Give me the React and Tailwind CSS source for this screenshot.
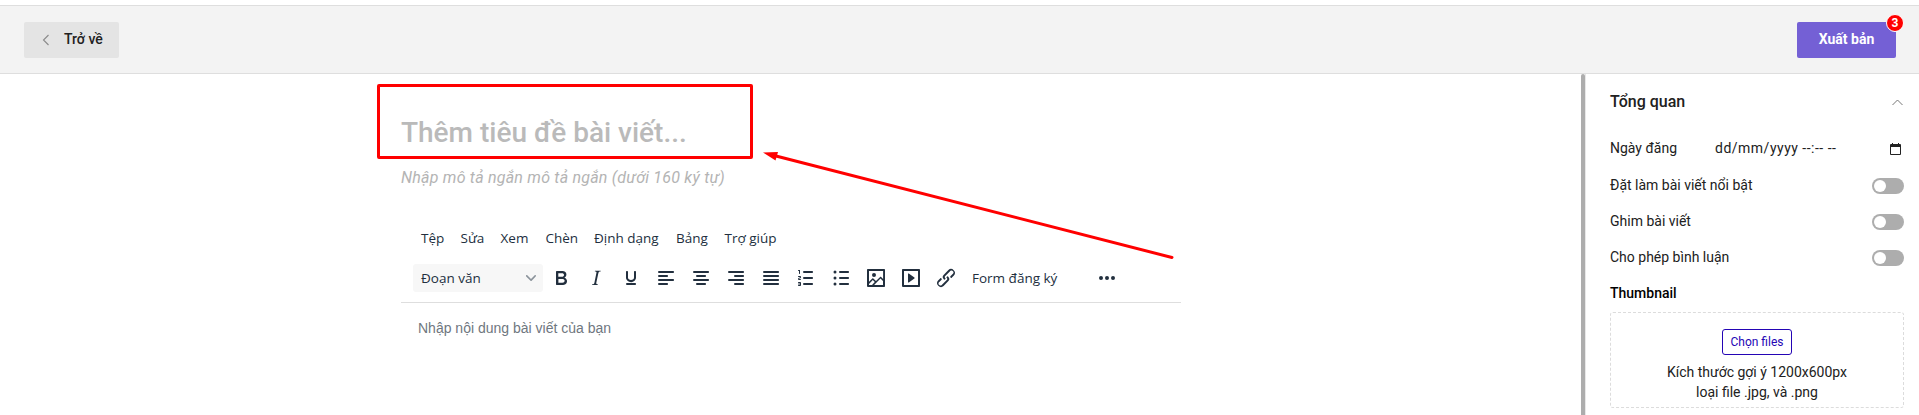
const ICONS = {
  bold: "M7.8 19c-.3 0-.5 0-.6-.2l-.2-.5V5.7c0-.2 0-.4.2-.5l.6-.2h5c1.5 0 2.7.3 3.5 1 .7.6 1.1 1.4 1.1 2.5a3 3 0 0 1-.6 1.9c-.4.6-1 1-1.6 1.2.4.1.9.3 1.3.6s.8.7 1 1.2c.4.4.5 1 .5 1.6 0 1.3-.4 2.3-1.3 3-.8.7-2.1 1-3.8 1H7.8Zm5-8.3c.6 0 1.2-.1 1.6-.5.4-.3.6-.7.6-1.3 0-1.1-.8-1.7-2.3-1.7H9.3v3.5h3.4Zm.5 6c.7 0 1.3-.1 1.7-.4.4-.4.6-.9.6-1.5s-.2-1-.7-1.4c-.4-.3-1-.4-2-.4H9.4v3.8h4Z",
  italic: "m16.7 4.7-.1.9h-.3c-.6 0-1 0-1.4.3-.3.3-.4.6-.5 1.1l-2.1 9.8v.6c0 .5.4.8 1.4.8h.2l-.2.8H8l.2-.8h.2c1.1 0 1.8-.5 2-1.5l2-9.8.1-.5c0-.6-.4-.8-1.4-.8h-.3l.2-.9h5.8Z",
  underline: "M16 5c.6 0 1 .4 1 1v5.5a4 4 0 0 1-.4 1.8l-1 1.4a5.3 5.3 0 0 1-5.5 1 5 5 0 0 1-1.6-1c-.5-.4-.8-.9-1.1-1.4a4 4 0 0 1-.4-1.8V6c0-.6.4-1 1-1s1 .4 1 1v5.5c0 .3 0 .6.2 1l.6.7a3.3 3.3 0 0 0 2.2.8 3.4 3.4 0 0 0 2.2-.8c.3-.2.4-.5.6-.8l.2-.9V6c0-.6.4-1 1-1ZM8 17h8c.6 0 1 .4 1 1s-.4 1-1 1H8a1 1 0 0 1 0-2Z",
  alignLeft: "M5 5h14c.6 0 1 .4 1 1s-.4 1-1 1H5a1 1 0 1 1 0-2Zm0 4h8c.6 0 1 .4 1 1s-.4 1-1 1H5a1 1 0 1 1 0-2Zm0 8h8c.6 0 1 .4 1 1s-.4 1-1 1H5a1 1 0 0 1 0-2Zm0-4h14c.6 0 1 .4 1 1s-.4 1-1 1H5a1 1 0 0 1 0-2Z",
  alignCenter: "M5 5h14c.6 0 1 .4 1 1s-.4 1-1 1H5a1 1 0 1 1 0-2Zm3 4h8c.6 0 1 .4 1 1s-.4 1-1 1H8a1 1 0 1 1 0-2Zm0 8h8c.6 0 1 .4 1 1s-.4 1-1 1H8a1 1 0 0 1 0-2Zm-3-4h14c.6 0 1 .4 1 1s-.4 1-1 1H5a1 1 0 0 1 0-2Z",
  alignRight: "M5 5h14c.6 0 1 .4 1 1s-.4 1-1 1H5a1 1 0 1 1 0-2Zm6 4h8c.6 0 1 .4 1 1s-.4 1-1 1h-8a1 1 0 0 1 0-2Zm0 8h8c.6 0 1 .4 1 1s-.4 1-1 1h-8a1 1 0 0 1 0-2Zm-6-4h14c.6 0 1 .4 1 1s-.4 1-1 1H5a1 1 0 0 1 0-2Z",
  justify: "M5 5h14c.6 0 1 .4 1 1s-.4 1-1 1H5a1 1 0 1 1 0-2Zm0 4h14c.6 0 1 .4 1 1s-.4 1-1 1H5a1 1 0 1 1 0-2Zm0 4h14c.6 0 1 .4 1 1s-.4 1-1 1H5a1 1 0 0 1 0-2Zm0 4h14c.6 0 1 .4 1 1s-.4 1-1 1H5a1 1 0 0 1 0-2Z",
  ordered: "M10 17h8c.6 0 1 .4 1 1s-.4 1-1 1h-8a1 1 0 0 1 0-2Zm0-6h8c.6 0 1 .4 1 1s-.4 1-1 1h-8a1 1 0 0 1 0-2Zm0-6h8c.6 0 1 .4 1 1s-.4 1-1 1h-8a1 1 0 1 1 0-2ZM6 4v3.5c0 .3-.2.5-.5.5a.5.5 0 0 1-.5-.5V5h-.5a.5.5 0 0 1 0-1H6Zm-1 8.8.2.2h1.3c.3 0 .5.2.5.5s-.2.5-.5.5H4.9a1 1 0 0 1-.9-1V13c0-.4.3-.8.6-1l1.2-.4.2-.3a.2.2 0 0 0-.2-.2H4.5a.5.5 0 0 1-.5-.5c0-.3.2-.5.5-.5h1.6c.5 0 .9.4.9 1v.1c0 .4-.3.8-.6 1l-1.2.4-.2.3ZM7 17v2c0 .6-.4 1-1 1H4.5a.5.5 0 0 1 0-1h1.2c.2 0 .3-.1.3-.3 0-.2-.1-.3-.3-.3H4.4a.4.4 0 1 1 0-.8h1.3c.2 0 .3-.1.3-.3 0-.2-.1-.3-.3-.3H4.5a.5.5 0 1 1 0-1H6c.6 0 1 .4 1 1Z",
  bullets: "M11 5h8c.6 0 1 .4 1 1s-.4 1-1 1h-8a1 1 0 0 1 0-2Zm0 6h8c.6 0 1 .4 1 1s-.4 1-1 1h-8a1 1 0 0 1 0-2Zm0 6h8c.6 0 1 .4 1 1s-.4 1-1 1h-8a1 1 0 0 1 0-2ZM4.500 6a1.500 1.500 0 1 1 3 0 1.500 1.500 0 0 1-3 0Zm0 6a1.500 1.500 0 1 1 3 0 1.500 1.500 0 0 1-3 0Zm0 6a1.500 1.500 0 1 1 3 0 1.500 1.500 0 0 1-3 0Z",
  image: "m5 15.7 3.3-3.2c.3-.3.7-.3 1 0L12 15l4.1-4c.3-.4.8-.4 1 0l2 1.9V5H5v10.7ZM5 18V19h3l2.8-2.9-2-2L5 17.9Zm14-3-2.5-2.4-6.4 6.5H19v-4ZM4 3h16c.6 0 1 .4 1 1v16c0 .6-.4 1-1 1H4a1 1 0 0 1-1-1V4c0-.6.4-1 1-1Zm6 8a2 2 0 1 0 0-4 2 2 0 0 0 0 4Z",
  media: "M4 3h16c.6 0 1 .4 1 1v16c0 .6-.4 1-1 1H4a1 1 0 0 1-1-1V4c0-.6.4-1 1-1Zm1 2v14h14V5H5Zm4.8 2.6 5.6 4a.5.5 0 0 1 0 .8l-5.6 4A.5.5 0 0 1 9 16V8a.5.5 0 0 1 .8-.4Z",
  link: "M6.2 12.3a1 1 0 0 1 1.4 1.4l-2 2a2 2 0 1 0 2.6 2.8l4.8-4.8a1 1 0 0 0 0-1.4 1 1 0 1 1 1.4-1.3 2.9 2.9 0 0 1 0 4L9.6 20a3.9 3.9 0 0 1-5.5-5.5l2-2Zm11.6-.6a1 1 0 0 1-1.4-1.4l2-2a2 2 0 1 0-2.6-2.8L11 10.3a1 1 0 0 0 0 1.4A1 1 0 1 1 9.6 13a2.9 2.9 0 0 1 0-4L14.4 4a3.9 3.9 0 0 1 5.5 5.5l-2 2Z",
  more: "M6 10a2 2 0 1 0 0 4 2 2 0 0 0 0-4Zm12 0a2 2 0 1 0 0 4 2 2 0 0 0 0-4Zm-6 0a2 2 0 1 0 0 4 2 2 0 0 0 0-4Z",
};

const TOOLS = ["bold", "italic", "underline", "alignLeft", "alignCenter", "alignRight", "justify", "ordered", "bullets", "image", "media", "link"];

const MENU = [
  { label: "Tệp", width: "w-[39.5px]" },
  { label: "Sửa", width: "w-[40px]" },
  { label: "Xem", width: "w-[45px]" },
  { label: "Chèn", width: "w-[48.5px]" },
  { label: "Định dạng", width: "w-[82px]" },
  { label: "Bảng", width: "w-[48.5px]" },
  { label: "Trợ giúp", width: "w-[60px]" },
];

function ToolIcon({ name }) {
  return (
    <button className="flex h-7 w-[35px] shrink-0 items-center justify-center">
      <svg className="size-6 fill-[#222f3e]" viewBox="0 0 24 24" fillRule="evenodd">
        <path fillRule="evenodd" d={ICONS[name]} />
      </svg>
    </button>
  );
}

function Header() {
  return (
    <header className="mt-[5px] flex h-[69px] shrink-0 items-center justify-between border-y border-[#dedede] bg-[#f3f3f3] pr-[23px] pl-6">
      <button className="flex h-9 w-[95px] items-center rounded-[2px] bg-[#e4e4e4] pl-[18px] text-[14px] font-medium text-[#212121]">
        <svg className="mr-[14px] h-3 w-2" viewBox="0 0 8 12" fill="none" stroke="#8a8a8a" strokeWidth="1.100">
          <path d="M6.500 1 1.500 6l5 5" />
        </svg>
        Trở về
      </button>
      <button className="relative flex h-9 w-[99px] items-center justify-center rounded-[2px] bg-[#7460d5] text-[14px] font-bold text-white">
        Xuất bản
        <span className="absolute -top-2 -right-2 flex size-[18px] items-center justify-center rounded-full border border-white bg-[#ff0000] text-[12px] leading-none">3</span>
      </button>
    </header>
  );
}

function Editor() {
  return (
    <main className="flex flex-1 flex-col pl-[401px]">
      <h1 className="mt-[39px] text-[28px] leading-10 font-medium text-[#bababa]">Thêm tiêu đề bài viết...</h1>
      <p className="mt-[13px] text-[16px] leading-6 tracking-[0.22px] text-[#b4b4b4] italic">Nhập mô tả ngắn mô tả ngắn (dưới 160 ký tự)</p>
      <div className="mt-[34px] w-[780px] border-b border-[#dedede] font-['Open_Sans',sans-serif] text-[13.5px] text-[#222f3e]">
        <nav className="flex h-7 items-center pl-5 whitespace-nowrap">
          {MENU.map((item) => (
            <span key={item.label} className={item.width}>{item.label}</span>
          ))}
        </nav>
        <div className="flex items-center pt-3 pb-[10px] pl-3">
          <div className="flex h-7 w-[130px] items-center justify-between rounded-[3px] bg-[#f7f7f7] pr-[7px] pl-2">
            Đoạn văn
            <svg className="size-[10px] fill-[#8b939b]" viewBox="0 0 10 10">
              <path d="M8.700 2.200c.3-.3.8-.3 1 0 .4.4.4.9 0 1.200L5.700 7.800c-.3.3-.9.3-1.200 0L.2 3.400a.8.8 0 0 1 0-1.200c.3-.3.8-.3 1.100 0L5 6l3.700-3.800Z" />
            </svg>
          </div>
          {TOOLS.map((name) => <ToolIcon key={name} name={name} />)}
          <span className="w-[126px] shrink-0 pl-[9px] whitespace-nowrap">Form đăng ký</span>
          <ToolIcon name="more" />
        </div>
      </div>
      <p className="mt-[15px] pl-[17px] font-['Liberation_Sans',sans-serif] text-[14px] leading-5 text-[#6f7780]">Nhập nội dung bài viết của bạn</p>
    </main>
  );
}

function SettingRow({ label }) {
  return (
    <div className="flex h-9 items-center justify-between">
      <span className="pb-px">{label}</span>
      <span className="flex h-4 w-8 items-center rounded-full bg-[#adadad] pl-[2px]">
        <span className="size-3 rounded-full bg-white" />
      </span>
    </div>
  );
}

function Sidebar() {
  return (
    <aside className="flex w-[338px] shrink-0">
      <div className="w-1 rounded-t-[2px] bg-[#adadad]" />
      <div className="flex-1 border-l border-[#e8e8e8] pr-[15px] pl-6 text-[14px] text-[#212121]">
        <div className="mt-4 flex h-6 items-center justify-between text-[16px] font-medium">
          Tổng quan
          <svg className="mr-px h-[7px] w-[11px]" viewBox="0 0 11 7" fill="none" stroke="#777">
            <path d="M.5 6 5.500 1l5 5" />
          </svg>
        </div>
        <div className="mt-4 mb-[2px] flex h-9 items-center">
          <span className="w-[105px]">Ngày đăng</span>
          <span className="flex-1 tracking-[0.5px] whitespace-nowrap">dd/mm/yyyy --:-- --</span>
          <svg className="mt-[2px] mr-[3px] h-3 w-[11px]" viewBox="0 0 11 12">
            <path fill="#222" fillRule="evenodd" d="M2 0h1v1h5V0h1v1h1q1 0 1 1v9q0 1-1 1H1q-1 0-1-1V2q0-1 1-1h1ZM1 4v7h9V4Z" />
          </svg>
        </div>
        <SettingRow label="Đặt làm bài viết nổi bật" />
        <SettingRow label="Ghim bài viết" />
        <SettingRow label="Cho phép bình luận" />
        <h2 className="flex h-9 items-center pb-[2px] font-medium text-black">Thumbnail</h2>
        <div className="flex h-24 flex-col items-center rounded-[3px] border border-dashed border-[#dcdcdc] pt-4 text-center leading-5">
          <button className="h-[26px] w-[70px] rounded-[3px] border border-[#2405b5] text-[12px] leading-6 text-[#2405b5]">Chọn files</button>
          <p className="mt-[7px]">Kích thước gợi ý 1200x600px<br />loại file .jpg, và .png</p>
        </div>
      </div>
    </aside>
  );
}

export default function App() {
  return (
    <div className="relative flex h-screen w-full flex-col overflow-hidden bg-white font-[Roboto,sans-serif]">
      <Header />
      <div className="flex min-h-0 flex-1">
        <Editor />
        <Sidebar />
      </div>
      <div className="absolute top-[84px] left-[377px] h-[75px] w-[376px] rounded-[2px] border-3 border-[#ff0000]" />
      <svg className="absolute top-[150px] left-[760px] h-[112px] w-[416px]" viewBox="0 0 416 112">
        <path d="M14 5.500 412 107.500" fill="none" stroke="#ff0000" strokeWidth="3" strokeLinecap="round" />
        <path d="M3 2.500 18 2 15.500 10.500Z" fill="#ff0000" />
      </svg>
    </div>
  );
}
